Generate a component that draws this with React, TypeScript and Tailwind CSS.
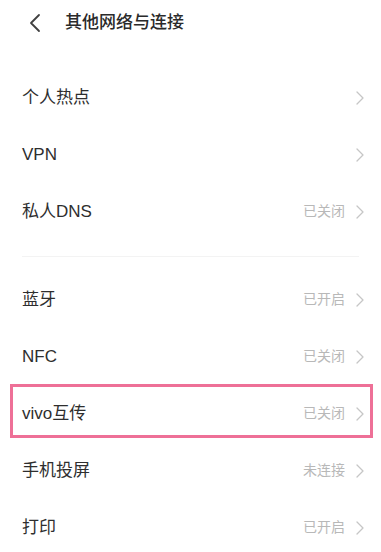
import React from "react";

type Item = { label: string; value?: string; marked?: boolean };

const groupOne: Item[] = [
  { label: "个人热点" },
  { label: "VPN" },
  { label: "私人DNS", value: "已关闭" },
];

const groupTwo: Item[] = [
  { label: "蓝牙", value: "已开启" },
  { label: "NFC", value: "已关闭" },
  { label: "vivo互传", value: "已关闭", marked: true },
  { label: "手机投屏", value: "未连接" },
  { label: "打印", value: "已开启" },
];

const Chevron = () => (
  <svg width="8" height="14" viewBox="0 0 8 14" fill="none">
    <polyline points="1,1 7,7 1,13" stroke="#c6c6c6" strokeWidth="1.3" strokeLinecap="round" strokeLinejoin="round" />
  </svg>
);

const Row = ({ item }: { item: Item }) => (
  <div className="relative flex h-[57px] items-center justify-between pl-[22px] pr-[17px]">
    {item.marked && (
      <span className="pointer-events-none absolute left-[10px] right-[8px] top-[-1px] h-[54px] border-[3px] border-[#ee7097]" />
    )}
    <span className="text-[17px] text-[#2e2e2e]">{item.label}</span>
    <div className="flex items-center gap-[11px]">
      {item.value && <span className="text-[14px] text-[#b8b8b8]">{item.value}</span>}
      <Chevron />
    </div>
  </div>
);

export default function App() {
  return (
    <div
      className="h-[552px] w-[381px] overflow-hidden bg-white"
      style={{ fontFamily: '"Liberation Sans", "Noto Sans CJK SC", sans-serif' }}
    >
      {/* Header */}
      <div className="flex h-[46px] items-center">
        <div className="flex w-[65px] justify-center pl-[4px]">
          <svg width="14" height="20" viewBox="0 0 14 20" fill="none">
            <polyline points="11,2 3,10 11,18" stroke="#404040" strokeWidth="1.8" strokeLinecap="round" strokeLinejoin="round" />
          </svg>
        </div>
        <span className="text-[17px] font-medium text-[#2a2a2a]">其他网络与连接</span>
      </div>

      <div className="h-[23px]" />

      {groupOne.map((item) => (
        <Row key={item.label} item={item} />
      ))}

      <div className="flex h-[31px] flex-col justify-center px-[22px] pt-[2px]">
        <div className="h-px bg-[#f3f3f3]" />
      </div>

      {groupTwo.map((item) => (
        <Row key={item.label} item={item} />
      ))}
    </div>
  );
}
